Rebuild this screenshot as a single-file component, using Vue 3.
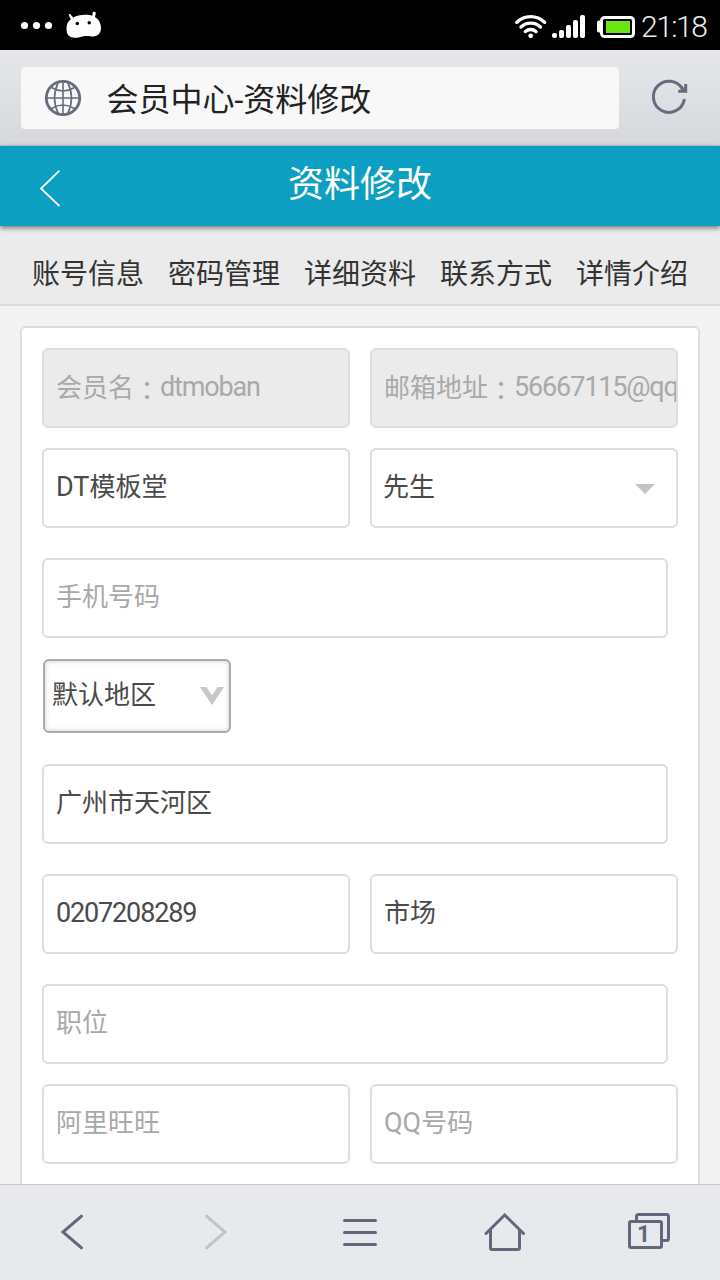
<template>
  <div class="phone">
    <div class="status">
      <div class="status_left">
        <svg width="104" height="50" viewBox="0 0 104 50">
          <g fill="#fff">
            <circle cx="24.5" cy="25.5" r="3.6" />
            <circle cx="36.5" cy="25.5" r="3.6" />
            <circle cx="48.5" cy="25.5" r="3.6" />
            <path
              d="M68.700 15c.2-1 1.400-1.200 2-.4l2.600 3.200c3-2.200 7-3 12-3 2.800 0 5 .3 7 1l.4-3c.2-1.200 2.600-1.300 3 0 .4 1.300-1 3.400-.6 4.400 3.600 2 5.900 6 5.900 10.800 0 6-4 8.500-9 8.500-3 0-5-.6-8-.3-3.500.4-5.500 1.600-9.500 1.600-5.500 0-8-3.500-8-9 0-4.500 1.500-7.800 4.300-9.600z"
            />
          </g>
          <circle cx="77.300" cy="23.500" r="1.700" />
          <circle cx="89.200" cy="22.700" r="1.700" />
        </svg>
      </div>
      <div class="status_right">
        <svg width="124" height="50" viewBox="514 0 124 50">
          <g fill="none" stroke="#fff" stroke-width="3.400" stroke-linecap="round">
            <path d="M516.800 22.200a20 20 0 0 1 27.800 0M521 27a14 14 0 0 1 19.400 0M525.400 31.500a8 8 0 0 1 10.600 0" />
          </g>
          <g fill="#fff">
            <circle cx="530.700" cy="35.800" r="2.400" />
            <rect x="552" y="33" width="5" height="5" rx="2" />
            <rect x="559" y="30" width="5" height="8" rx="2" />
            <rect x="566" y="25" width="5" height="13" rx="2" />
            <rect x="573" y="20" width="5" height="18" rx="2" />
            <rect x="580" y="15" width="5" height="23" rx="2" />
            <rect x="597" y="20.500" width="6" height="12" rx="2" />
          </g>
          <rect x="601.500" y="17.500" width="32" height="19" rx="3" stroke="#fff" stroke-width="3" />
          <rect x="606" y="21" width="24" height="12" fill="#6be613" />
        </svg>
        <span class="clock">21:18</span>
      </div>
    </div>

    <div class="browser">
      <div class="address">
        <svg width="38" height="38" viewBox="0 0 38 38" fill="none" stroke="#666b7e">
          <circle cx="19" cy="19" r="16.700" stroke-width="2.800" />
          <path
            stroke-width="1.600"
            d="M19 2v34M2 19h34M14.500 2.800Q6.500 19 14.500 35.200M23.500 2.800Q31.500 19 23.500 35.200M7.500 8.500Q19 15.500 30.500 8.500M7.500 29.500Q19 22.500 30.500 29.500"
          />
        </svg>
        <span class="url">会员中心-资料修改</span>
      </div>
      <svg class="reload" width="40" height="40" viewBox="0 0 40 40" fill="none" stroke="#666b7e" stroke-width="3">
        <path d="M34.200 22.200A15.600 15.600 0 1 1 32.500 11" stroke-linecap="round" />
        <path d="M28.200 13.300h7.500V6" stroke-width="3" />
        <path d="M30.500 8.500l4.500 4.500" />
      </svg>
    </div>

    <header class="header">
      <svg class="back" width="24" height="40" viewBox="0 0 24 40" fill="none" stroke="#fff" stroke-width="1.800">
        <path d="M21.500 2.700L3 20.500l18.500 17.700" />
      </svg>
      <h1>资料修改</h1>
    </header>

    <nav class="tabs">
      <a v-for="tab in tabs" :key="tab">{{ tab }}</a>
    </nav>

    <main class="content">
      <div class="card">
        <div v-for="(row, index) in rows" :key="index" :class="['row', `row_${row.type}`]">
          <div v-for="field in row.fields" :key="field.text" :class="['field', field.state]">
            <div class="value">
              <span v-for="(run, k) in split(field.text)" :key="k" :class="run.type">{{ run.text }}</span>
            </div>
            <svg v-if="field.state === 'select'" class="arrow" width="20" height="10" viewBox="0 0 20 10">
              <path d="M0 0h20L10 10z" fill="#c5c5c5" />
            </svg>
            <svg v-if="field.state === 'area'" class="arrow" width="24" height="18" viewBox="0 0 24 18">
              <path d="M0 0h6.500L12 8.500 17.500 0H24L12 18z" fill="#c8c8c8" />
            </svg>
          </div>
        </div>
      </div>
    </main>

    <footer class="toolbar">
      <div class="tool">
        <svg width="48" height="48" viewBox="0 0 48 48"><path d="M33.500 8.200L15 24l18.500 15.800" /></svg>
      </div>
      <div class="tool disabled">
        <svg width="48" height="48" viewBox="0 0 48 48"><path d="M14.500 8.200L33 24 14.500 39.800" /></svg>
      </div>
      <div class="tool">
        <svg width="48" height="48" viewBox="0 0 48 48"><path d="M8.500 12.500h31M8.500 24.500h31M8.500 36.500h31" /></svg>
      </div>
      <div class="tool">
        <svg width="48" height="48" viewBox="0 0 48 48">
          <path d="M6 25.500L24.700 7 43.500 25.500M10.500 22v18q0 1.500 1.500 1.500h26q1.500 0 1.500-1.500V22" />
        </svg>
      </div>
      <div class="tool">
        <svg width="48" height="48" viewBox="0 0 48 48">
          <path d="M12.500 13.500v-5q0-2 2-2h28q2 0 2 2v22q0 2-2 2h-5" />
          <rect x="5.500" y="13.500" width="32" height="26" rx="1.500" />
        </svg>
        <span class="count">1</span>
      </div>
    </footer>
  </div>
</template>

<script setup>
import { ref } from 'vue'

const tabs = ref(['账号信息', '密码管理', '详细资料', '联系方式', '详情介绍'])

const rows = ref([
  {
    type: 'half',
    fields: [
      { text: '会员名：dtmoban', state: 'readonly' },
      { text: '邮箱地址：56667115@qq', state: 'readonly' }
    ]
  },
  {
    type: 'half',
    fields: [
      { text: 'DT模板堂', state: 'filled' },
      { text: '先生', state: 'select' }
    ]
  },
  { type: 'full', fields: [{ text: '手机号码', state: 'empty' }] },
  { type: 'area', fields: [{ text: '默认地区', state: 'area' }] },
  { type: 'full', fields: [{ text: '广州市天河区', state: 'filled' }] },
  {
    type: 'spaced',
    fields: [
      { text: '0207208289', state: 'filled' },
      { text: '市场', state: 'filled' }
    ]
  },
  { type: 'full', fields: [{ text: '职位', state: 'empty' }] },
  {
    type: 'half',
    fields: [
      { text: '阿里旺旺', state: 'empty' },
      { text: 'QQ号码', state: 'empty' }
    ]
  }
])

// latin letters are set tighter, the wide colon sits in the middle of its cell
function split(text) {
  return text.match(/[A-Z]+|[!-~]+|：|[^!-~：]+/g).map((part) => {
    let type = 'han'
    if (part === '：') type = 'colon'
    else if (/^[A-Z]/.test(part)) type = 'caps'
    else if (/^[!-~]/.test(part)) type = 'latin'
    return { text: part, type }
  })
}
</script>

<style>
body {
  margin: 0;
  background: #f3f3f3;
}
</style>

<style scoped>
.phone {
  width: 720px;
  height: 1280px;
  display: flex;
  flex-direction: column;
  overflow: hidden;
  background: #f3f3f3;
  font-family: Roboto, 'Noto Sans CJK SC', sans-serif;
}

.phone * {
  box-sizing: border-box;
}

.phone svg {
  display: block;
  flex: none;
}

.status {
  flex: none;
  height: 50px;
  display: flex;
  justify-content: space-between;
  background: #000;
}

.status_right {
  display: flex;
  align-items: center;
  width: 206px;
}

.clock {
  margin: 2px 0 0 3px;
  color: #eee;
  font-size: 30px;
  font-weight: 300;
  letter-spacing: -1.5px;
}

.browser {
  flex: none;
  height: 96px;
  padding: 0 30px 0 21px;
  display: flex;
  align-items: center;
  justify-content: space-between;
  background: linear-gradient(#e6e7eb, #d7d8dd);
  border-bottom: 1px solid #c6c8cb;
}

.address {
  width: 598px;
  height: 62px;
  padding-left: 23px;
  display: flex;
  align-items: center;
  gap: 24.5px;
  border-radius: 4px;
  background: #f8f8f8;
  color: #222;
  font-size: 32px;
}

.url {
  margin-bottom: 2px;
}

.header {
  flex: none;
  position: relative;
  height: 80px;
  display: flex;
  align-items: center;
  justify-content: center;
  background: #0c9fc1;
  box-shadow: 0 2px 5px rgba(0, 0, 0, 0.5);
}

.header h1 {
  margin: 0 0 2px;
  color: #fff;
  font-size: 36px;
  font-weight: 400;
  line-height: 50px;
}

.back {
  position: absolute;
  left: 38px;
  top: 22px;
}

.tabs {
  flex: none;
  height: 80px;
  padding: 13px 32px 0;
  display: flex;
  align-items: center;
  justify-content: space-between;
  background: #ebebeb;
  border-bottom: 2px solid #ddd;
  color: #333;
  font-size: 28px;
}

.content {
  flex: 1;
  min-height: 0;
  padding: 20px 20px 0;
  overflow: hidden;
}

.card {
  height: 1000px;
  padding: 20px;
  background: #fff;
  border: 2px solid #ddd;
  border-radius: 6px;
}

.row {
  display: grid;
  grid-template-columns: 1fr 1fr;
  gap: 20px;
  margin-bottom: 20px;
}

.row_full,
.row_spaced {
  margin-top: 30px;
}

.row_full {
  grid-template-columns: 1fr;
  padding-right: 10px;
}

.row_area {
  grid-template-columns: 188px;
  margin: 21px 0 31px 1px;
}

.field {
  min-width: 0;
  height: 80px;
  padding: 0 0 4px 12px;
  display: flex;
  align-items: center;
  overflow: hidden;
  white-space: nowrap;
  background: #fff;
  border: 2px solid #ddd;
  border-radius: 6px;
  color: #4a4a4a;
  font-size: 26px;
}

.value {
  display: flex;
  align-items: baseline;
  line-height: 40px;
  margin-top: 1px;
}

.readonly,
.empty {
  color: #a9a9a9;
}

.readonly {
  background: #ebebeb;
}

.readonly .latin {
  transform: translateY(-1px);
}

.select {
  padding-left: 11px;
}

.select .arrow {
  margin: 5px 21px 0 auto;
}

.area {
  height: 74px;
  padding-left: 7px;
  border-color: #aaa;
  box-shadow: inset 0 0 5px rgba(0, 0, 0, 0.2);
}

.area .arrow {
  margin: 3px 5px 0 auto;
}

.latin {
  font-size: 27px;
  letter-spacing: -1.15px;
}

.caps {
  font-size: 27px;
}

.colon {
  font-family: 'Noto Sans CJK TC', sans-serif;
  transform: translateY(3px);
}

.toolbar {
  flex: none;
  height: 96px;
  padding-bottom: 1px;
  display: flex;
  background: #e8e9ed;
  border-top: 1px solid #c8c8ca;
}

.tool {
  position: relative;
  flex: 1;
  display: flex;
  align-items: center;
  justify-content: center;
}

.tool svg {
  fill: none;
  stroke: #62677c;
  stroke-width: 3;
  stroke-linecap: round;
}

.disabled svg {
  stroke: #c2c3ca;
}

.count {
  position: absolute;
  left: 61px;
  top: 36px;
  color: #62677c;
  font-size: 23px;
  font-weight: 700;
  line-height: 28px;
}
</style>
